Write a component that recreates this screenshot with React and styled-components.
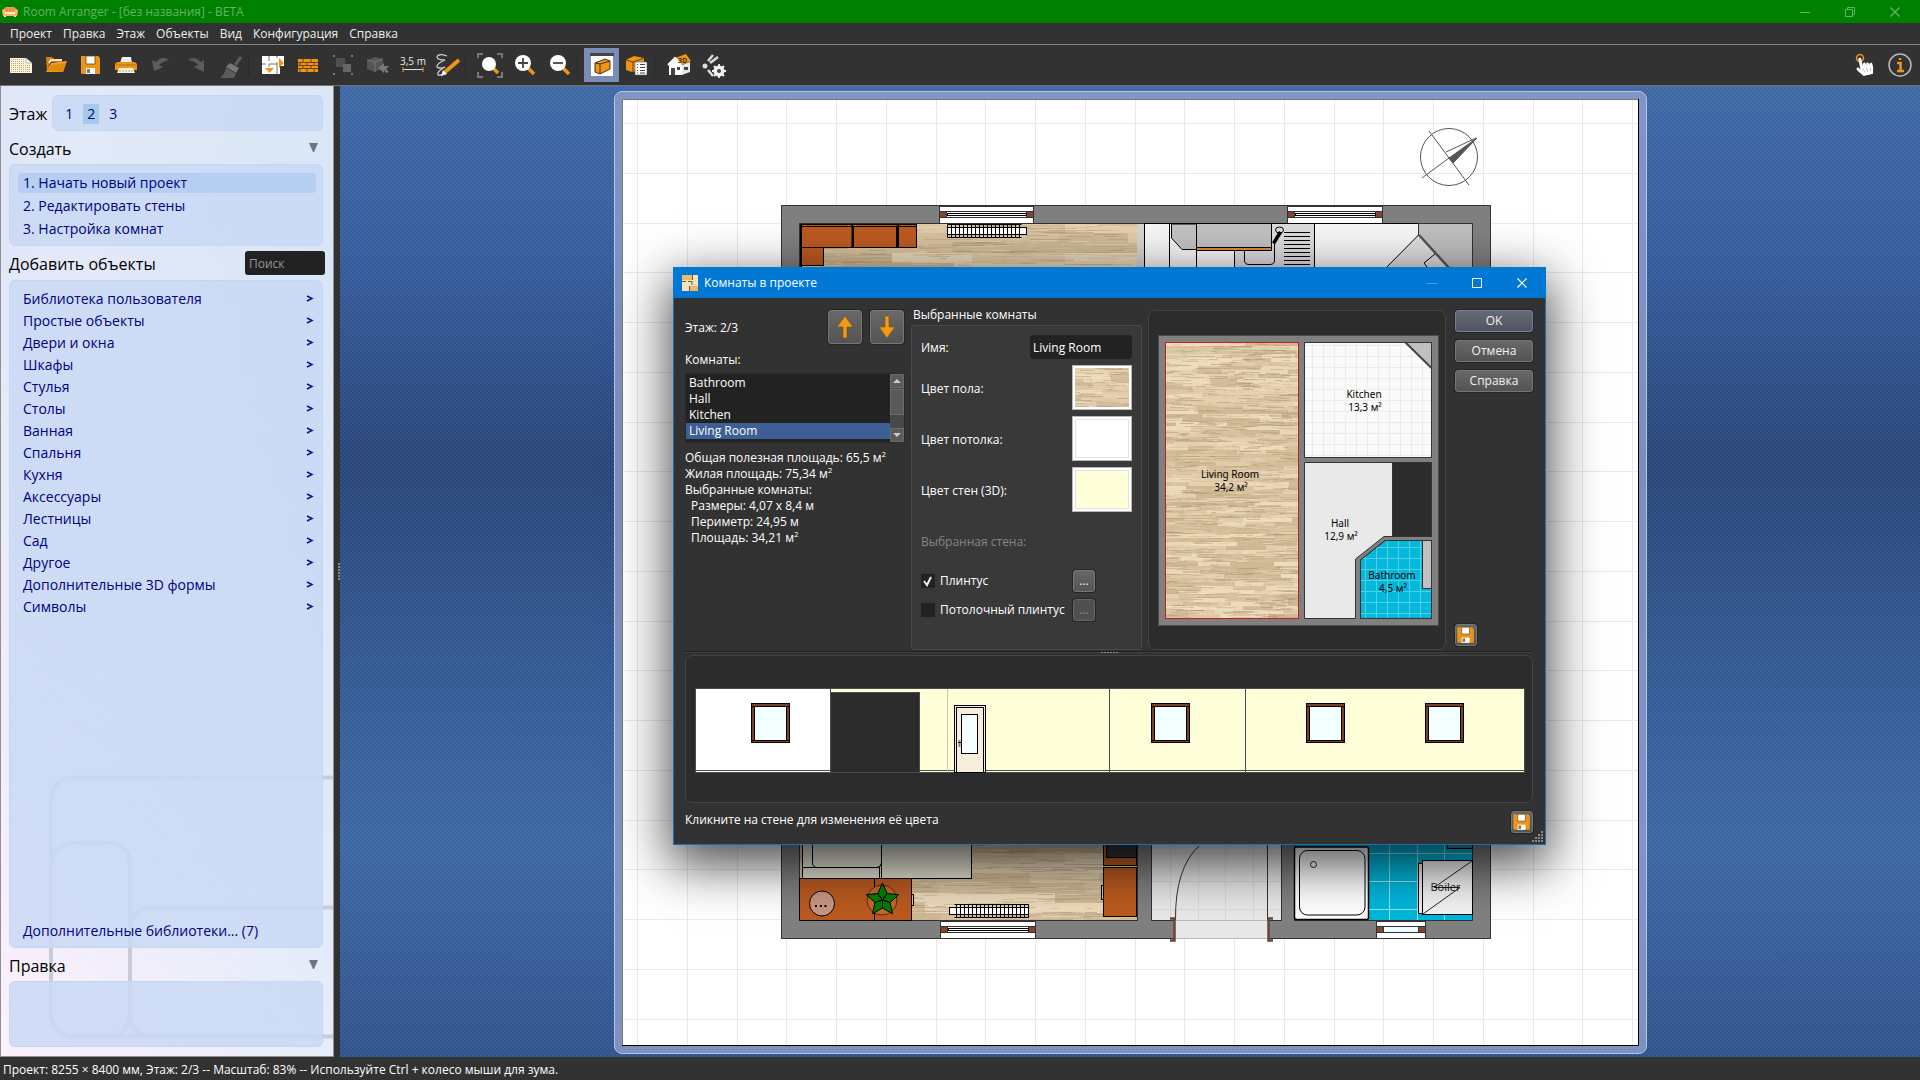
import { Fragment, useState } from "react";
import styled, { createGlobalStyle } from "styled-components";
import { FaHandPointer } from "react-icons/fa";

const GlobalStyle = createGlobalStyle`
  * {
    box-sizing: border-box;
  }
  body {
    margin: 0;
    background: #323232;
    color: #fff;
    font-family: "Open Sans", "Noto Sans", sans-serif;
    font-size: 12px;
    line-height: 16px;
  }
  button,
  input {
    font: inherit;
    color: inherit;
    margin: 0;
    padding: 0;
    border: 0;
  }
  a {
    color: inherit;
    text-decoration: none;
  }
  svg {
    display: block;
    flex-shrink: 0;
  }
`;

const ORANGE = "#ee9518";
const GREY = "#5c5c5c";
const WALL = "#808080";
const WOOD = "#bb5a20";

const AppShell = styled.div`
  min-height: 100vh;
  display: flex;
  flex-direction: column;
`;

const TitleBar = styled.header`
  display: flex;
  align-items: center;
  height: 23px;
  padding: 0 3px 0 2px;
  gap: 5px;
  background: #008000;
  color: #62b562;
  .window-title {
    flex: 1;
  }
  .controls {
    display: flex;
    align-self: stretch;
  }
`;

const WindowButton = styled.button`
  display: flex;
  align-items: center;
  justify-content: center;
  width: 45px;
  align-self: stretch;
  background: none;
`;

const MenuBar = styled.nav`
  display: flex;
  align-items: center;
  gap: 11px;
  height: 22px;
  padding: 1px 10px 0;
  border-bottom: 1px solid #848484;
  color: #eee;
`;

const Toolbar = styled.div`
  display: flex;
  align-items: center;
  height: 41px;
  padding: 0 3px;
  border-bottom: 1px solid #77736e;
  .spacer {
    flex: 1;
  }
`;

const ToolButton = styled.button`
  display: flex;
  align-items: center;
  justify-content: center;
  width: 35px;
  height: 34px;
  background: ${(p) => (p.$active ? "#7a8db6" : "none")};
`;

const Divider = styled.span`
  width: 7px;
  height: 22px;
  border-left: 1px solid #292929;
`;

const Workspace = styled.main`
  flex: 1;
  display: flex;
`;

const Sidebar = styled.aside`
  position: relative;
  z-index: 0;
  display: flex;
  flex-direction: column;
  width: 334px;
  padding: 9px 10px 9px 8px;
  border: 1px solid #8f8f96;
  border-top: 0;
  background: linear-gradient(100deg, #dfe7f8 0%, #e2e9f8 20%, #d3e5f5 100%);
  color: #000080;
  font-size: 14px;
  line-height: 20px;
  &::before {
    content: "";
    position: absolute;
    inset: 0;
    z-index: -2;
    background: linear-gradient(80deg, #fcf0fc, rgba(240, 240, 252, 0.7) 60%, rgba(230, 236, 250, 0.4));
    mask-image: linear-gradient(to top, #000, transparent 90%);
  }
`;

const SidebarArt = styled.svg`
  position: absolute;
  right: 0;
  bottom: 0;
  z-index: -1;
`;

const Box = styled.div`
  display: flex;
  flex-direction: column;
  border: 1px solid #c6d6f1;
  border-radius: 6px;
  background: rgba(201, 217, 244, 0.86);
  padding: ${(p) => p.$padding || "8px"};
  height: ${(p) => p.$height || "auto"};
  flex: ${(p) => (p.$grow ? 1 : "none")};
`;

const FloorRow = styled.div`
  display: flex;
  align-items: center;
  gap: 5px;
  .floor-box {
    flex: 1;
    flex-direction: row;
    align-items: center;
    gap: 6px;
    padding-top: 10px;
  }
`;

const SectionTitle = styled.h2`
  margin: 0;
  padding-top: 2px;
  color: #000;
  font-size: 16px;
  font-weight: 400;
  line-height: 24px;
`;

const SectionHead = styled.div`
  display: flex;
  align-items: center;
  justify-content: space-between;
  height: ${(p) => (p.$flush ? 34 : 33)}px;
  padding-right: ${(p) => (p.$flush ? 0 : 5)}px;
`;

const FloorButton = styled.button`
  width: 16px;
  height: 20px;
  background: ${(p) => (p.$active ? "#a3cae8" : "none")};
  cursor: pointer;
`;

const StepLink = styled.a`
  height: 20px;
  margin-bottom: 3px;
  padding-left: 5px;
  border-radius: 4px;
  background: ${(p) => (p.$active ? "#b5cef1" : "none")};
`;

const CategoryLink = styled.a`
  display: flex;
  align-items: center;
  justify-content: space-between;
  height: 22px;
  margin-top: ${(p) => (p.$last ? "auto" : 0)};
`;

const SearchInput = styled.input`
  width: 80px;
  height: 24px;
  margin-right: -2px;
  padding: 0 4px;
  border-radius: 3px;
  background: #222;
  color: #ddd;
  font-size: 12px;
  &::placeholder {
    color: #969696;
    opacity: 1;
  }
`;

const Splitter = styled.div`
  display: flex;
  align-items: center;
  justify-content: flex-end;
  width: 6px;
  background: #323232;
`;

const Grip = styled.span`
  width: ${(p) => (p.$vertical ? 2 : 17)}px;
  height: ${(p) => (p.$vertical ? 17 : 1)}px;
  background: repeating-linear-gradient(${(p) => (p.$vertical ? "180deg" : "90deg")}, #8a8a8a 0 2px, transparent 2px 3px);
`;

const Canvas = styled.section`
  flex: 1;
  min-width: 0;
  display: flex;
  justify-content: center;
  align-items: flex-start;
  padding: 5px 0 0 1px;
  background:
    radial-gradient(circle at 1px 1px, rgba(120, 165, 220, 0.13) 1px, transparent 1px) 0 0 / 4px 4px,
    radial-gradient(circle at 3px 3px, rgba(120, 165, 220, 0.13) 1px, transparent 1px) 0 0 / 4px 4px,
    linear-gradient(#3f68a4 0, #365a9a 18%, #284375 39%, #355a93 62%, #3d66a2 78%, #31518a 100%);
`;

const PaperFrame = styled.div`
  padding: 7px;
  border: 1px solid #b4c6e6;
  border-radius: 8px;
  background: rgba(142, 159, 201, 0.82);
`;

const StatusBar = styled.footer`
  height: 23px;
  padding: 5px 3px 0;
`;

const Dialog = styled.section`
  position: absolute;
  left: 673px;
  top: 267px;
  width: 873px;
  border: 1px solid #1b6fb3;
  border-top: 0;
  background: #323232;
  box-shadow: 0 16px 48px 4px rgba(0, 0, 0, 0.7);
`;

const DialogTitle = styled.header`
  display: flex;
  align-items: center;
  gap: 6px;
  height: 31px;
  margin: 0 -1px;
  padding: 0 2px 0 9px;
  background: #0078d4;
  .dialog-title {
    flex: 1;
  }
  .controls {
    display: flex;
    align-self: stretch;
  }
`;

const DialogBody = styled.div`
  padding: 9px 12px 11px 11px;
`;

const Columns = styled.div`
  display: grid;
  grid-template-columns: 220px 231px 1fr 81px;
  column-gap: 6px;
`;

const RoomColumn = styled.div`
  padding-top: 3px;
  .floor-line {
    display: flex;
    align-items: center;
    gap: 8px;
    padding-right: 1px;
  }
  .floor-name {
    flex: 1;
    padding-top: 2px;
  }
  .rooms-label {
    margin: 8px 0 5px;
  }
`;

const Button = styled.button`
  display: flex;
  align-items: center;
  justify-content: center;
  width: ${(p) => p.$width || "100%"};
  height: ${(p) => p.$height || "22px"};
  border: 1px solid ${(p) => (p.$primary ? "#6d80a8" : "#767676")};
  border-radius: 3px;
  background: ${(p) =>
    p.$primary ? "linear-gradient(#666a75, #50545e)" : "linear-gradient(#686868, #545454)"};
  box-shadow: 0 0 0 1px #262626;
  color: #f2f2f2;
  &:disabled {
    color: #8a8a8a;
    border-color: #666;
    background: #505050;
  }
`;

const RoomList = styled.div`
  display: flex;
  height: 70px;
  border: 1px solid #2a2a2a;
  background: #222;
  ul {
    flex: 1;
    margin: 0;
    padding: 1px 0 0;
    list-style: none;
  }
`;

const RoomItem = styled.li`
  height: 16px;
  padding-left: 3px;
  background: ${(p) => (p.$selected ? "#3e5f94" : "none")};
  cursor: default;
`;

const ScrollBar = styled.div`
  display: flex;
  flex-direction: column;
  justify-content: space-between;
  width: 14px;
  background: #484848;
  .thumb {
    height: 26px;
    margin-bottom: 12px;
    border: 1px solid #6c6c6c;
    background: #5a5a5a;
  }
`;

const ScrollArrow = styled.button`
  display: flex;
  align-items: center;
  justify-content: center;
  height: 14px;
  border: 1px solid #6c6c6c;
  background: #5a5a5a;
`;

const Stats = styled.div`
  margin-top: 7px;
  .indent {
    padding-left: 6px;
  }
  sup {
    font-size: 8px;
    line-height: 0;
  }
`;

const RoomForm = styled.form`
  h3 {
    margin: 0 0 2px 2px;
    font-size: 12px;
    font-weight: 400;
  }
`;

const Group = styled.div`
  display: flex;
  flex-direction: column;
  gap: 6px;
  height: 325px;
  padding: 9px;
  border: 1px solid #4a4a4a;
  border-radius: 3px;
  background: #393939;
`;

const Field = styled.div`
  display: flex;
  align-items: center;
  justify-content: space-between;
  label {
    padding-top: 2px;
  }
`;

const NameInput = styled.input`
  width: 102px;
  height: 24px;
  padding: 0 3px;
  border-radius: 4px;
  background: #222;
`;

const Swatch = styled.button`
  width: 60px;
  height: 45px;
  padding: 2px;
  border: 1px solid #b8b8b8;
  background: #fff;
  .fill {
    display: block;
    height: 100%;
    border: 1px solid #e2e2e2;
    background: ${(p) => p.$color};
  }
`;

const DisabledLabel = styled.div`
  margin: 16px 0 14px;
  color: #858585;
`;

const CheckRow = styled.div`
  display: grid;
  grid-template-columns: 14px 1fr 22px;
  align-items: center;
  column-gap: 5px;
  padding-right: 37px;
  margin-bottom: 1px;
  label {
    white-space: nowrap;
  }
`;

const CheckBox = styled.input`
  appearance: none;
  width: 14px;
  height: 14px;
  background: #222;
  &:checked {
    background: #222
      url("data:image/svg+xml,%3Csvg xmlns='http://www.w3.org/2000/svg' viewBox='0 0 14 14'%3E%3Cpath d='M3 7l3 4 4-8' fill='none' stroke='%23eee' stroke-width='2'/%3E%3C/svg%3E")
      center / 14px;
  }
`;

const Panel = styled.div`
  border: 1px solid #444;
  border-radius: 7px;
  background: #2c2c2c;
  overflow: hidden;
  margin-top: ${(p) => p.$top || 0}px;
`;

const ButtonColumn = styled.div`
  display: flex;
  flex-direction: column;
  gap: 8px;
  padding: 3px 0 4px 3px;
  .bottom {
    margin-top: auto;
  }
`;

const HorizontalSplitter = styled.div`
  display: flex;
  justify-content: center;
  align-items: center;
  height: 5px;
  background: linear-gradient(#323232 1px, #202020 1px 2px, #404040 2px 3px, #323232 3px);
`;

const DialogFooter = styled.footer`
  display: flex;
  justify-content: space-between;
  align-items: flex-start;
  margin-top: 8px;
  .hint {
    padding-top: 1px;
  }
`;

const ResizeGrip = styled.svg`
  position: absolute;
  right: 1px;
  bottom: 1px;
`;

/* ---------- drawings ---------- */

// small repeatable generator so that the parquet is the same on every render
const makeRandom = (seed) => () => {
  seed = (seed * 16807) % 2147483647;
  return seed / 2147483647;
};

const PLANK_TONES = ["#dcc6a4", "#e4d0b0", "#d3bc98", "#ead7b6", "#d8c19e", "#cfb995", "#e0cba9", "#eddbba"];
const STREAK_TONES = ["#a98f6f", "#bfa581", "#f3e6c8", "#b59b79", "#e9d8b8", "#a0886a"];

const buildParquet = (seed, width, height, step, length) => {
  const random = makeRandom(seed);
  const parts = [];
  for (let y = 0; y < height; y += step) {
    let x = -random() * length;
    while (x < width) {
      const w = length * (0.6 + random() * 0.8);
      parts.push({ x, y, w, h: step, fill: PLANK_TONES[Math.floor(random() * PLANK_TONES.length)], o: 1 });
      x += w;
    }
  }
  for (let i = 0; i < (width * height) / (step * 7); i++) {
    parts.push({
      x: random() * width - 10,
      y: Math.floor(random() * height),
      w: 5 + random() * length * 0.5,
      h: 1,
      fill: STREAK_TONES[Math.floor(random() * STREAK_TONES.length)],
      o: 0.15 + random() * 0.35,
    });
  }
  return parts;
};

const LARGE_PARQUET = buildParquet(71, 340, 120, 10, 90);
const SMALL_PARQUET = buildParquet(29, 134, 277, 4, 38);

const Parquet = ({ parts }) =>
  parts.map((p, i) => (
    <rect key={i} x={p.x} y={p.y} width={p.w} height={p.h} fill={p.fill} opacity={p.o} shapeRendering="crispEdges" />
  ));

const PlanWindow = ({ x, y, width, glass }) => (
  <g transform={`translate(${x} ${y})`} stroke="#333">
    <rect width={width} height="17" fill="#fff" />
    <rect y="5" width={width} height="6" fill="#fff" />
    <rect y="5" width="7" height="6" fill="#84452a" />
    <rect x={width - 7} y="5" width="7" height="6" fill="#84452a" />
    {glass ? (
      <rect x="7" y="5" width={width - 14} height="6" fill="#f0fcff" />
    ) : (
      <rect x="8" y="7" width={width - 15} height="2" fill="#fff" stroke="#000" />
    )}
  </g>
);

const Radiator = ({ x, y, flip }) => (
  <g transform={`translate(${x} ${y})${flip ? " translate(79 0) scale(-1 1)" : ""}`} stroke="#000" fill="none">
    <rect x="0" y="3" width="79" height="7" fill="#fff" />
    <path d="M0 0H74M0 13H74" />
    {Array.from({ length: 19 }, (_, i) => (
      <path key={i} d={`M${i * 4} 0V13`} />
    ))}
  </g>
);

const Compass = () => (
  <g stroke="#555" fill="none">
    <circle cx="1449" cy="157" r="28.5" />
    <path d="M1429 131L1469 185M1422 178L1449 158M1476 138L1446 152" />
    <path d="M1477 138L1449 158L1453 163Z" fill="#555" />
  </g>
);

const gridLines = (from, to, step) => {
  const out = [];
  for (let v = from; v < to; v += step) out.push(Math.round(v) + 0.5);
  return out;
};

const STAR = Array.from({ length: 5 }, (_, i) => {
  const a = ((i * 72 - 90) * Math.PI) / 180;
  const l = a - Math.PI / 5;
  const r = a + Math.PI / 5;
  const at = (angle, radius) => `${882.5 + Math.cos(angle) * radius} ${900 + Math.sin(angle) * radius}`;
  return `M882.5 900L${at(l, 8)}L${at(a, 17)}L${at(r, 8)}Z`;
}).join("");

const FloorPlan = () => (
  <svg width="1017" height="947" viewBox="622 99 1017 947" role="img" aria-label="План этажа">
    <defs>
      <pattern id="parquet-large" x="799" y="223" width="340" height="120" patternUnits="userSpaceOnUse">
        <Parquet parts={LARGE_PARQUET} />
      </pattern>
    </defs>
    <rect x="622" y="99" width="1017" height="947" fill="#fff" />
    <g stroke="#e9e9e9">
      {gridLines(637, 1638, 49.76).map((x) => (
        <path key={x} d={`M${x} 99V1045`} />
      ))}
      {gridLines(123, 1045, 49.76).map((y) => (
        <path key={y} d={`M622 ${y}H1638`} />
      ))}
    </g>
    <path d="M622.5 1045V99.5H1638" stroke="#777" fill="none" />
    <path d="M1638.5 99V1045.5H622" stroke="#000" fill="none" />
    <Compass />

    {/* outer and inner walls */}
    <rect x="781.5" y="205.5" width="709" height="733" fill={WALL} stroke="#333" />
    <rect x="799.5" y="223.5" width="338" height="697" fill="url(#parquet-large)" stroke="#333" />
    <rect x="1137.5" y="223.5" width="335" height="300" fill="#f6f6f6" stroke="#333" />
    <rect x="1137" y="224" width="7" height="300" fill="#d4d4d4" />
    <PlanWindow x={939.5} y={206.5} width={94} />
    <PlanWindow x={1287.5} y={206.5} width={95} />
    <PlanWindow x={940.5} y={921.5} width={95} />
    <PlanWindow x={1376.5} y={921.5} width={49} glass />
    <Radiator x={947.5} y={224.5} />
    <Radiator x={949.5} y={904.5} flip />

    {/* living room, top cabinets */}
    <g fill={WOOD} stroke="#000">
      <rect x="801" y="224.5" width="51" height="23" />
      <rect x="852.5" y="224.5" width="45" height="23" />
      <rect x="898.5" y="224.5" width="18" height="23" />
      <path d="M801 226.5H916M853.5 226V247M896.5 226V247" />
      <rect x="801" y="247.5" width="22.5" height="18" />
      <path d="M801 224V280" strokeWidth="2" />
    </g>

    {/* kitchen units */}
    <g stroke="#000" fill="none">
      <path d="M1144.5 223V280M1169.5 223V280M1196.5 250V280M1234.5 250V280M1144 223.5H1418" />
      <path d="M1171.5 224V238L1182 249.5H1196.5V224Z" fill="#c2c2c2" />
      <path d="M1271.5 223.5H1314.5V280H1234.5V250H1271.5Z" fill="#dcdcde" />
      <rect x="1196.5" y="223.5" width="75" height="24" fill="#c0c0c0" />
      <rect x="1196.5" y="247.5" width="75" height="3" fill="#dd8f35" />
      <path d="M1244.5 251V260Q1244.5 264.5 1249 264.5H1270Q1274.5 264.5 1274.5 260V244" />
      {[232, 236, 240, 244, 248, 252, 256, 260, 264].map((y) => (
        <path key={y} d={`M1284 ${y}.5H1310`} />
      ))}
      <ellipse cx="1279.5" cy="230" rx="4" ry="3" />
      <path d="M1280.5 232L1273.5 243.5" strokeWidth="3.5" />
      <path d="M1418.5 223.5V235L1460 280H1472.5V223.5Z" fill="#bebebe" stroke="#333" />
      <path d="M1418.5 235L1374 280H1460Z" fill="#ddd" stroke="#000" />
      <path d="M1419 235L1460 280" stroke="#555" strokeWidth="2.5" />
      <path d="M1435 254L1424 263L1430 271" />
    </g>

    {/* sofa and cabinets below the dialog */}
    <g stroke="#000" fill="#e2e2d2">
      <rect x="802.5" y="800" width="79" height="78.5" />
      <rect x="881.5" y="800" width="90" height="78.5" />
      <path d="M812.5 800V863Q812.5 867 817 867.5H877Q881 867 881.5 863M802.5 867.5H879.5V878.5" fill="none" />
    </g>
    <g fill={WOOD} stroke="#000">
      <path d="M799.5 878.5H911.5V920.5H799.5ZM874.5 878.5V920.5" />
      <rect x="911.5" y="894.5" width="2" height="11" fill="#e2cda8" />
      <circle cx="822" cy="903.5" r="12.5" fill="#c99683" />
      <path d="M815 906H817M820 906H822M824.5 906H826.5" strokeWidth="2" />
      <circle cx="882" cy="900" r="15" fill="#c56a26" stroke="#5a2a10" />
      <path d={STAR} fill="#008000" />
      <rect x="1103.5" y="867.5" width="33" height="49" />
      <rect x="1101.5" y="885.5" width="2" height="14" fill="#e2cda8" />
      <rect x="1103.5" y="840.5" width="33" height="25" />
      <rect x="1106.5" y="830.5" width="30" height="27" fill="#333" />
    </g>

    {/* hall with the entrance door */}
    <rect x="1151.5" y="780.5" width="130" height="140" fill="#e8e8e8" stroke="#333" />
    <path d="M1170.5 780V920M1198.5 780V920M1225.5 780V920M1253.5 780V920M1152 853.5H1281M1152 881.5H1281M1152 909.5H1281" stroke="#dadada" />
    <rect x="1175" y="920" width="93" height="18.5" fill="#e8e8e8" />
    <path d="M1175 920.5H1268M1175 938.5H1268" stroke="#bbb" />
    <path d="M1267.5 780V920M1175.5 920Q1175 868 1199 846" stroke="#333" fill="none" />
    <path d="M1170 918.5H1174.5V940.5H1170M1273 918.5H1268.5V940.5H1273" stroke="#6b4536" strokeWidth="2.5" fill="none" />

    {/* bathroom */}
    <rect x="1294.5" y="780.5" width="178" height="140" fill="#00b7dc" stroke="#333" />
    <path d="M1389.5 780V920M1417.5 780V920M1444.5 780V920M1295 853.5H1472M1295 881.5H1472M1295 909.5H1472" stroke="#9be2ef" />
    <rect x="1294.5" y="847" width="74" height="72.5" fill="#fff" stroke="#000" strokeWidth="1.5" rx="2" />
    <rect x="1299.5" y="850.5" width="65.5" height="64.5" fill="none" stroke="#000" rx="8" />
    <circle cx="1313.5" cy="864.5" r="3" fill="none" stroke="#222" />
    <rect x="1447.5" y="838.5" width="25" height="10" fill="#3f8792" stroke="#000" />
    <rect x="1418.5" y="863.5" width="5" height="50" fill="#eee" stroke="#000" />
    <rect x="1422.5" y="860.5" width="50" height="54" fill="#f2f2f2" stroke="#000" />
    <path d="M1472 861L1434 887.5H1460L1423 914" stroke="#222" fill="none" />
    <text x="1445.5" y="891" fontSize="11" textAnchor="middle" fill="#111">
      Boiler
    </text>
  </svg>
);

const RoomLabel = ({ x, y, name, area }) => (
  <text x={x} y={y} textAnchor="middle" fontSize="10" fontFamily="Noto Sans, sans-serif" fill="#000">
    {name}
    <tspan x={x + 1} dy="13">
      {area}
    </tspan>
  </text>
);

const RoomPreview = () => (
  <svg width="100%" viewBox="1149 311 296 338" role="img" aria-label="Комнаты этажа">
    <defs>
      <pattern id="parquet-small" x="1165" y="342" width="134" height="277" patternUnits="userSpaceOnUse">
        <Parquet parts={SMALL_PARQUET} />
      </pattern>
      <pattern id="tile-light" x="1301" y="345" width="11" height="11" patternUnits="userSpaceOnUse">
        <path d="M.5 0V11M0 .5H11" stroke="#ececec" />
      </pattern>
      <pattern id="tile-cyan" x="1376" y="547" width="11" height="11" patternUnits="userSpaceOnUse">
        <path d="M.5 0V11M0 .5H11" stroke="#50cfe6" />
      </pattern>
    </defs>
    <rect x="1158.5" y="335.5" width="280" height="290" fill={WALL} stroke="#4c4c4c" />
    <rect x="1165.5" y="342.5" width="133" height="276" fill="url(#parquet-small)" stroke="#c02020" />
    <g stroke="#333">
      <rect x="1304.5" y="342.5" width="127" height="115" fill="#fafafa" />
      <rect x="1304.5" y="342.5" width="127" height="115" fill="url(#tile-light)" />
      <path d="M1405.5 342.5H1431.5V368Z" fill="#c0c0c0" />
      <path d="M1405 342L1432 368.5" stroke="#444" strokeWidth="2" />
      <path d="M1304.5 462.5H1392.5V536.5H1384L1355.5 559V618.5H1304.5Z" fill="#e9e9e9" />
      <rect x="1392.5" y="462.5" width="39" height="74" fill="#2c2c2c" />
      <path d="M1385 540.5H1431.5V618.5H1360.5V560Z" fill="#04b8dc" />
      <path d="M1385 540.5H1431.5V618.5H1360.5V560Z" fill="url(#tile-cyan)" />
      <rect x="1422.5" y="540.5" width="9" height="48" fill="#c0c0c0" />
    </g>
    <RoomLabel x={1230} y={478} name="Living Room" area="34,2 м²" />
    <RoomLabel x={1364} y={398} name="Kitchen" area="13,3 м²" />
    <RoomLabel x={1340} y={527} name="Hall" area="12,9 м²" />
    <RoomLabel x={1392} y={579} name="Bathroom" area="4,5 м²" />
  </svg>
);

const ElevationWindow = ({ x }) => (
  <g transform={`translate(${x} 703.5)`} stroke="#000">
    <rect width="38" height="39" fill="#7a4228" />
    <rect x="3" y="3" width="32" height="34" fill="#f2feff" />
    <path d="M0 3H38M0 37H38" />
  </g>
);

const WallElevation = () => (
  <svg width="100%" viewBox="686 656 846 146" role="img" aria-label="Развёртка стен">
    <g stroke="#4c4c4c">
      <rect x="695.5" y="688.5" width="829" height="84" fill="#fefed8" />
      <rect x="695.5" y="688.5" width="135" height="84" fill="#fff" />
      <path d="M695 770.5H1524M1109.5 688V772M1245.5 688V772" />
      <path d="M947.5 689V772" stroke="#c8c8b0" />
      <rect x="830.5" y="692.5" width="89" height="80" fill="#2c2c2c" />
    </g>
    <g stroke="#000" fill="#f6eddb">
      <rect x="954.5" y="705.5" width="31" height="67" />
      <rect x="956.5" y="707.5" width="27" height="65" />
      <rect x="961.5" y="714.5" width="16" height="39" fill="#f2feff" />
      <path d="M959.5 740V747" stroke="#888" strokeWidth="2" />
      <path d="M958 742.5H962" />
    </g>
    <ElevationWindow x={751.5} />
    <ElevationWindow x={1151.5} />
    <ElevationWindow x={1306.5} />
    <ElevationWindow x={1425.5} />
  </svg>
);

const WoodSwatch = () => (
  <svg width="54" height="39" viewBox="10 30 54 39">
    <Parquet parts={SMALL_PARQUET} />
  </svg>
);

/* ---------- icons ---------- */

const Glyph = ({ children, size = 30 }) => (
  <svg width={size} height={size} viewBox="0 0 30 30" fill="none">
    {children}
  </svg>
);

const SofaIcon = () => (
  <svg width="16" height="12" viewBox="0 0 16 12">
    <path d="M2 4Q2 1 5 1H11Q14 1 14 4V6H2Z" fill="#f2a04c" />
    <path d="M0 5Q0 3 2 3Q3 3 3 6H13Q13 3 14 3Q16 3 16 5L15 10H1Z" fill="#ffb469" />
    <path d="M3 6H13V8H3Z" fill="#fff0d0" />
    <path d="M5 2V5M8 2V5M11 2V5" stroke="#d97a28" />
    <path d="M2 10H4V11H2ZM12 10H14V11H12Z" fill="#fff" />
  </svg>
);

const NewIcon = () => (
  <Glyph>
    <path d="M4 8H20L26 13V23H4Z" fill="#fbf6e6" />
    <path d="M20 8V13H26Z" fill="#fff" stroke="#888" strokeWidth=".6" />
    {[9.5, 11.5, 13.5, 15.5, 17.5, 19.5, 21.5].map((y) => (
      <path key={y} d={`M5 ${y}H${y < 14 ? 19 : 25}`} stroke="#d3a04a" strokeDasharray="1 1" />
    ))}
  </Glyph>
);

const OpenIcon = () => (
  <Glyph>
    <path d="M5 7H11L13 9H21V12H9L6 22Z" fill="#d9800f" />
    <path d="M8 13L10 10H21" stroke="#fff" strokeWidth="1.5" />
    <path d="M10 13L26 11L22 22H5Z" fill="#f3a02c" />
    <path d="M6 21L10 15L25 13L22 22Z" fill="#e08a0e" />
  </Glyph>
);

const SaveIcon = ({ size }) => (
  <Glyph size={size}>
    <path d="M5 6H22L24 8V24H6L5 23Z" fill={ORANGE} />
    <path d="M10 6H19V14H10Z" fill="#fff" stroke="#6b4510" strokeWidth=".8" />
    <path d="M10 18H19V24H10Z" fill="#fff" />
    <path d="M11 19H14V23H11Z" fill="#777" />
  </Glyph>
);

const PrintIcon = () => (
  <Glyph>
    <path d="M11 7H20L21 13H9Z" fill="#eee" />
    <path d="M4 15Q4 12 8 12H22Q26 12 26 15V20H4Z" fill={ORANGE} />
    <path d="M5 15H25" stroke="#b86c08" />
    <path d="M8 18H22L24 23H6Z" fill="#fbf3dc" />
    <path d="M8 21H22" stroke="#c9a05a" strokeDasharray="2 1" />
  </Glyph>
);

const UndoIcon = () => (
  <Glyph>
    <path d="M6 10L8 21L17 17L13 15Q17 11 23 10Q17 5 10 12Z" fill={GREY} />
  </Glyph>
);

const RedoIcon = () => (
  <Glyph>
    <path d="M23 10L23 22L13 17L17 15Q14 11 7 10Q13 5 20 12Z" fill={GREY} />
  </Glyph>
);

const BrushIcon = () => (
  <Glyph>
    <path d="M25 7L19 15" stroke={GREY} strokeWidth="3" />
    <path d="M14 13L23 18L20 23L10 17Z" fill="#777" />
    <path d="M10 18L20 24L18 28H4Q9 24 10 18Z" fill={GREY} />
  </Glyph>
);

const RoomsIcon = () => (
  <Glyph>
    <path d="M4 6H26V16H22V24H4Z" fill="#fff" />
    <path d="M4 14H8M11 14H19M11 6V11M19 6V8M19 12V24M11 14V17" stroke="#777" />
    <path d="M21 8L26 13L21 18Z" fill={ORANGE} />
    <path d="M7 18H16L11.5 23Z" fill={ORANGE} />
  </Glyph>
);

const BricksIcon = () => (
  <Glyph>
    <path d="M5 9H25V22H5Z" fill={ORANGE} />
    <path
      d="M5 12.5H25M5 15.5H25M5 18.5H25M10 9V12M18 9V12M7 12V15M14 12V15M21 12V15M10 15V18M18 15V18M7 18V22M14 18V22M21 18V22"
      stroke="#6d4210"
    />
  </Glyph>
);

const GroupIcon = () => (
  <Glyph>
    <path d="M8 8H17V17H8Z" fill="#505050" />
    <path d="M15 14H23V22H15Z" fill="#666" />
    <path d="M5 5H7V7H5ZM23 5H25V7H23ZM5 23H7V25H5ZM23 23H25V25H23Z" fill="#777" />
  </Glyph>
);

const MoveObjectIcon = () => (
  <Glyph>
    <path d="M4 10L12 7L20 9V18L12 22L4 19Z" fill="#555" />
    <path d="M4 10L12 12L20 9M12 12V22" stroke="#777" />
    <path d="M15 18L21 13V16H26L23 19L26 22L23 23L21 20V23Z" fill="#777" />
  </Glyph>
);

const DimensionIcon = () => (
  <Glyph>
    <text x="15" y="15" fontSize="10" textAnchor="middle" fill="#e8e8e8">
      3,5 m
    </text>
    <path d="M5 19.5H25" stroke="#ddd" />
    <path d="M5 17V22M25 17V22" stroke={ORANGE} />
  </Glyph>
);

const PencilIcon = () => (
  <Glyph>
    <path d="M14 6Q5 3 4 7Q4 10 12 10Q3 14 4 17Q6 19 12 17Q3 22 5 25Q8 26 13 23" stroke="#ccc" strokeWidth="1.3" />
    <path d="M12 22L26 10" stroke={ORANGE} strokeWidth="4" />
    <path d="M8 26L10 20L14 24Z" fill="#fff" />
  </Glyph>
);

const ZoomFitIcon = () => (
  <Glyph>
    <path d="M3 8V4H8M22 4H27V8M3 22V27H8M22 27H27V22" stroke="#777" strokeWidth="2" />
    <path d="M18 18L23 23" stroke={ORANGE} strokeWidth="3.5" />
    <circle cx="14" cy="14" r="7" fill="#fff" />
  </Glyph>
);

const ZoomIcon = ({ plus }) => (
  <Glyph>
    <path d="M18 18L24 24" stroke={ORANGE} strokeWidth="3.5" />
    <circle cx="13" cy="13" r="8" fill="#fff" />
    <path d={plus ? "M8 13H18M13 8V18" : "M8 13H18"} stroke="#444" strokeWidth="1.8" />
  </Glyph>
);

const BoxViewIcon = () => (
  <Glyph>
    <path d="M4 4H26V26H4Z" fill="#fff" />
    <path d="M3 3H27V6H3Z" fill="#444" />
    <path d="M8 13L18 9L23 11V19L13 24L8 22Z" fill={ORANGE} stroke="#4a3010" />
    <path d="M8 13L13 14L23 11M13 14V24" stroke="#4a3010" />
  </Glyph>
);

const BoxListIcon = () => (
  <Glyph>
    <path d="M4 10L12 6L22 8V20L10 22L4 20Z" fill={ORANGE} />
    <path d="M4 10L11 12L22 8M11 12V22" stroke="#6d4210" />
    <path d="M13 12H25V25H13Z" fill="#fff" stroke="#555" strokeWidth=".6" />
    <path
      d="M15 14.5H16M15 17.5H16M15 20.5H16M15 23H16M18 14.5H23M18 17.5H23M18 20.5H23M18 23H23"
      stroke="#444"
    />
  </Glyph>
);

const HouseIcon = () => (
  <Glyph>
    <path d="M5 15L11 8L18 15V25H5Z" fill="#fff" />
    <path d="M18 15L26 12V22L18 25Z" fill="#e8e8e8" />
    <path d="M11 8L22 4L27 11L18 15Z" fill={ORANGE} />
    <path d="M4 15L11 8L17 15" stroke="#fff" strokeWidth="2" />
    <path d="M7 18H11V25H7ZM13 17H16V20H13ZM20 17H24V20H20Z" fill="#444" />
    <text x="14" y="13" fontSize="7" fontWeight="700" fill="#4a3010">
      3D
    </text>
  </Glyph>
);

const RenderIcon = () => (
  <Glyph>
    <circle cx="6" cy="16" r="2.5" fill="#ddd" />
    <path d="M9 11L14 5M11 13L19 7M9 20L14 26" stroke="#ddd" strokeWidth="2.5" />
    <circle cx="20" cy="21" r="4" stroke="#f4f4f4" strokeWidth="3" />
    <path d="M20 14V28M13 21H27M15 16L25 26M25 16L15 26" stroke="#f4f4f4" strokeWidth="1.8" />
    <circle cx="20" cy="21" r="2" fill="#444" />
  </Glyph>
);

const TouchIcon = () => (
  <Glyph>
    <circle cx="10" cy="8" r="3.5" stroke={ORANGE} strokeWidth="1.5" />
    <g transform="rotate(-12 13 17)">
      <FaHandPointer x="5" y="7" size={19} color="#fff" />
    </g>
  </Glyph>
);

const InfoIcon = () => (
  <Glyph>
    <circle cx="15" cy="15" r="11" stroke="#b9b9b9" strokeWidth="1.5" />
    <path d="M15 8V10M12 13H15.5V21M12 21H19" stroke={ORANGE} strokeWidth="2.5" />
  </Glyph>
);

const ArrowGlyph = ({ down }) => (
  <svg width="20" height="26" viewBox="0 0 20 26">
    <path
      d={down ? "M8 2H12V13H18L10 24L2 13H8Z" : "M8 24H12V13H18L10 2L2 13H8Z"}
      fill="#f29a10"
      stroke="#7a4d10"
      strokeWidth=".6"
    />
  </svg>
);

const Triangle = () => (
  <svg width="9" height="9" viewBox="0 0 9 9">
    <path d="M0 0H9L5 9H4Z" fill="#6e747c" />
  </svg>
);

const Chevron = () => (
  <svg width="8" height="9" viewBox="0 0 8 9">
    <path d="M1 1L6 3.5L1 6" stroke="#10108c" strokeWidth="1.5" fill="none" />
  </svg>
);

const MinimizeGlyph = ({ color }) => (
  <svg width="10" height="10" viewBox="0 0 10 10">
    <path d="M0 5.5H10" stroke={color} />
  </svg>
);

const CloseGlyph = ({ color }) => (
  <svg width="10" height="10" viewBox="0 0 10 10">
    <path d="M.5 .5L9.5 9.5M9.5 .5L.5 9.5" stroke={color} strokeWidth="1.2" />
  </svg>
);

const PlanIcon = () => (
  <svg width="16" height="16" viewBox="0 0 16 16">
    <path d="M0 0H16V16H0Z" fill="#f6e2bd" />
    <path d="M0 0H11V5H0ZM8 11H16V16H8Z" fill="#f0b868" />
    <path d="M0 6.5H4M6 6.5H10V10M10.5 0V5M7.5 11V16" stroke="#6d5a45" fill="none" />
  </svg>
);

/* ---------- content ---------- */

const MENU = ["Проект", "Правка", "Этаж", "Объекты", "Вид", "Конфигурация", "Справка"];

const TOOLS = [
  [
    ["Новый", NewIcon],
    ["Открыть", OpenIcon],
    ["Сохранить", SaveIcon],
    ["Печать", PrintIcon],
    ["Отменить", UndoIcon],
    ["Повторить", RedoIcon],
    ["Кисть", BrushIcon],
  ],
  [
    ["Комнаты", RoomsIcon],
    ["Стены", BricksIcon],
    ["Группировать", GroupIcon],
    ["Переместить", MoveObjectIcon],
    ["Размер", DimensionIcon],
    ["Рисовать", PencilIcon],
  ],
  [
    ["Показать всё", ZoomFitIcon],
    ["Увеличить", () => <ZoomIcon plus />],
    ["Уменьшить", ZoomIcon],
  ],
  [
    ["Объекты", BoxViewIcon, true],
    ["Список объектов", BoxListIcon],
  ],
  [
    ["3D вид", HouseIcon],
    ["Рендер", RenderIcon],
  ],
];

const STEPS = ["1. Начать новый проект", "2. Редактировать стены", "3. Настройка комнат"];

const CATEGORIES = [
  "Библиотека пользователя",
  "Простые объекты",
  "Двери и окна",
  "Шкафы",
  "Стулья",
  "Столы",
  "Ванная",
  "Спальня",
  "Кухня",
  "Аксессуары",
  "Лестницы",
  "Сад",
  "Другое",
  "Дополнительные 3D формы",
  "Символы",
];

const ROOMS = ["Bathroom", "Hall", "Kitchen", "Living Room"];

const MainToolbar = () => (
  <Toolbar>
    {TOOLS.map((group, i) => (
      <Fragment key={i}>
        {i > 0 && <Divider />}
        {group.map(([name, Icon, active]) => (
          <ToolButton key={name} title={name} aria-label={name} $active={active}>
            <Icon />
          </ToolButton>
        ))}
      </Fragment>
    ))}
    <span className="spacer" />
    <ToolButton aria-label="Сенсорный режим">
      <TouchIcon />
    </ToolButton>
    <ToolButton aria-label="Информация">
      <InfoIcon />
    </ToolButton>
  </Toolbar>
);

const SidePanel = () => {
  const [floor, setFloor] = useState(2);

  return (
    <Sidebar>
      <SidebarArt width="332" height="300" viewBox="1 756 332 300" fill="none" stroke="#c9cbdb" strokeWidth="4">
        <path d="M333 777.5H76Q51 777.5 51 802V1011Q51 1036.5 76 1036.5H333" />
        <path d="M51 867Q53 842.5 76 842.5H106Q130 842.5 130 867V1011Q130 1036.5 106 1036.5" />
        <path d="M333 907.5H151Q131 907.5 130 930M130 1015Q133 1036.5 151 1036.5" />
      </SidebarArt>
      <FloorRow>
        <SectionTitle>Этаж</SectionTitle>
        <Box className="floor-box" $height="36px">
          {[1, 2, 3].map((n) => (
            <FloorButton key={n} $active={n === floor} onClick={() => setFloor(n)}>
              {n}
            </FloorButton>
          ))}
        </Box>
      </FloorRow>
      <SectionHead>
        <SectionTitle>Создать</SectionTitle>
        <Triangle />
      </SectionHead>
      <Box $height="82px" $padding="8px 6px 0 8px">
        {STEPS.map((step, i) => (
          <StepLink key={step} href="#" $active={i === 0}>
            {step}
          </StepLink>
        ))}
      </Box>
      <SectionHead $flush>
        <SectionTitle>Добавить объекты</SectionTitle>
        <SearchInput placeholder="Поиск" aria-label="Поиск" />
      </SectionHead>
      <Box $grow $padding="7px 8px 5px 13px">
        {CATEGORIES.map((name) => (
          <CategoryLink key={name} href="#">
            {name}
            <Chevron />
          </CategoryLink>
        ))}
        <CategoryLink href="#" $last>
          Дополнительные библиотеки... (7)
        </CategoryLink>
      </Box>
      <SectionHead>
        <SectionTitle>Правка</SectionTitle>
        <Triangle />
      </SectionHead>
      <Box $height="66px" />
    </Sidebar>
  );
};

const RoomsDialog = () => {
  const [room, setRoom] = useState("Living Room");
  const [baseboard, setBaseboard] = useState(true);
  const [cornice, setCornice] = useState(false);

  return (
    <Dialog role="dialog" aria-label="Комнаты в проекте">
      <DialogTitle>
        <PlanIcon />
        <span className="dialog-title">Комнаты в проекте</span>
        <div className="controls">
          <WindowButton aria-label="Свернуть">
            <MinimizeGlyph color="#4ba0e2" />
          </WindowButton>
          <WindowButton aria-label="Развернуть">
            <svg width="10" height="10" viewBox="0 0 10 10">
              <path d="M.5 .5H9.5V9.5H.5Z" fill="none" stroke="#fff" />
            </svg>
          </WindowButton>
          <WindowButton aria-label="Закрыть">
            <CloseGlyph color="#fff" />
          </WindowButton>
        </div>
      </DialogTitle>
      <DialogBody>
        <Columns>
          <RoomColumn>
            <div className="floor-line">
              <span className="floor-name">Этаж: 2/3</span>
              <Button $width="34px" $height="34px" aria-label="Этаж выше">
                <ArrowGlyph />
              </Button>
              <Button $width="34px" $height="34px" aria-label="Этаж ниже">
                <ArrowGlyph down />
              </Button>
            </div>
            <div className="rooms-label">Комнаты:</div>
            <RoomList>
              <ul role="listbox" aria-label="Комнаты">
                {ROOMS.map((name) => (
                  <RoomItem
                    key={name}
                    role="option"
                    aria-selected={name === room}
                    $selected={name === room}
                    onClick={() => setRoom(name)}
                  >
                    {name}
                  </RoomItem>
                ))}
              </ul>
              <ScrollBar>
                <ScrollArrow aria-label="Вверх">
                  <svg width="8" height="4" viewBox="0 0 8 4">
                    <path d="M0 4L4 0L8 4Z" fill="#ccc" />
                  </svg>
                </ScrollArrow>
                <div className="thumb" />
                <ScrollArrow aria-label="Вниз">
                  <svg width="8" height="4" viewBox="0 0 8 4">
                    <path d="M0 0L4 4L8 0Z" fill="#ccc" />
                  </svg>
                </ScrollArrow>
              </ScrollBar>
            </RoomList>
            <Stats>
              <div>
                Общая полезная площадь: 65,5 м<sup>2</sup>
              </div>
              <div>
                Жилая площадь: 75,34 м<sup>2</sup>
              </div>
              <div>Выбранные комнаты:</div>
              <div className="indent">Размеры: 4,07 x 8,4 м</div>
              <div className="indent">Периметр: 24,95 м</div>
              <div className="indent">
                Площадь: 34,21 м<sup>2</sup>
              </div>
            </Stats>
          </RoomColumn>

          <RoomForm onSubmit={(e) => e.preventDefault()}>
            <h3>Выбранные комнаты</h3>
            <Group>
              <Field>
                <label htmlFor="room-name">Имя:</label>
                <NameInput id="room-name" value={room} onChange={(e) => setRoom(e.target.value)} />
              </Field>
              <Field>
                <label htmlFor="floor-color">Цвет пола:</label>
                <Swatch id="floor-color" type="button">
                  <WoodSwatch />
                </Swatch>
              </Field>
              <Field>
                <label htmlFor="ceiling-color">Цвет потолка:</label>
                <Swatch id="ceiling-color" type="button" $color="#fff">
                  <span className="fill" />
                </Swatch>
              </Field>
              <Field>
                <label htmlFor="wall-color">Цвет стен (3D):</label>
                <Swatch id="wall-color" type="button" $color="#fefed8">
                  <span className="fill" />
                </Swatch>
              </Field>
              <DisabledLabel>Выбранная стена:</DisabledLabel>
              <CheckRow>
                <CheckBox
                  id="baseboard"
                  type="checkbox"
                  checked={baseboard}
                  onChange={() => setBaseboard(!baseboard)}
                />
                <label htmlFor="baseboard">Плинтус</label>
                <Button type="button" disabled={!baseboard}>
                  ...
                </Button>
              </CheckRow>
              <CheckRow>
                <CheckBox id="cornice" type="checkbox" checked={cornice} onChange={() => setCornice(!cornice)} />
                <label htmlFor="cornice">Потолочный плинтус</label>
                <Button type="button" disabled={!cornice}>
                  ...
                </Button>
              </CheckRow>
            </Group>
          </RoomForm>

          <Panel $top={3}>
            <RoomPreview />
          </Panel>

          <ButtonColumn>
            <Button $primary>OK</Button>
            <Button>Отмена</Button>
            <Button>Справка</Button>
            <Button className="bottom" $width="22px" aria-label="Сохранить план">
              <SaveIcon size={26} />
            </Button>
          </ButtonColumn>
        </Columns>
        <HorizontalSplitter>
          <Grip />
        </HorizontalSplitter>
        <Panel>
          <WallElevation />
        </Panel>
        <DialogFooter>
          <span className="hint">Кликните на стене для изменения её цвета</span>
          <Button $width="22px" aria-label="Сохранить развёртку">
            <SaveIcon size={26} />
          </Button>
        </DialogFooter>
      </DialogBody>
      <ResizeGrip width="12" height="12" viewBox="0 0 12 12">
        <path
          d="M9 0H11V2H9ZM6 3H8V5H6ZM9 3H11V5H9ZM3 6H5V8H3ZM6 6H8V8H6ZM9 6H11V8H9ZM0 9H2V11H0ZM3 9H5V11H3ZM6 9H8V11H6ZM9 9H11V11H9Z"
          fill="#8a8a8a"
        />
      </ResizeGrip>
    </Dialog>
  );
};

const App = () => (
  <AppShell>
    <GlobalStyle />
    <TitleBar>
      <SofaIcon />
      <span className="window-title">Room Arranger - [без названия] - BETA</span>
      <div className="controls">
        <WindowButton aria-label="Свернуть">
          <MinimizeGlyph color="#62b562" />
        </WindowButton>
        <WindowButton aria-label="Восстановить">
          <svg width="10" height="10" viewBox="0 0 10 10">
            <path d="M.5 2.5H7.5V9.5H.5ZM2.5 2V.5H9.5V7.5H8" fill="none" stroke="#62b562" />
          </svg>
        </WindowButton>
        <WindowButton aria-label="Закрыть">
          <CloseGlyph color="#62b562" />
        </WindowButton>
      </div>
    </TitleBar>
    <MenuBar>
      {MENU.map((item) => (
        <a key={item} href="#">
          {item}
        </a>
      ))}
    </MenuBar>
    <MainToolbar />
    <Workspace>
      <SidePanel />
      <Splitter>
        <Grip $vertical />
      </Splitter>
      <Canvas>
        <PaperFrame>
          <FloorPlan />
        </PaperFrame>
      </Canvas>
    </Workspace>
    <StatusBar>Проект: 8255 × 8400 мм, Этаж: 2/3 -- Масштаб: 83% -- Используйте Ctrl + колесо мыши для зума.</StatusBar>
    <RoomsDialog />
  </AppShell>
);

export default App;
